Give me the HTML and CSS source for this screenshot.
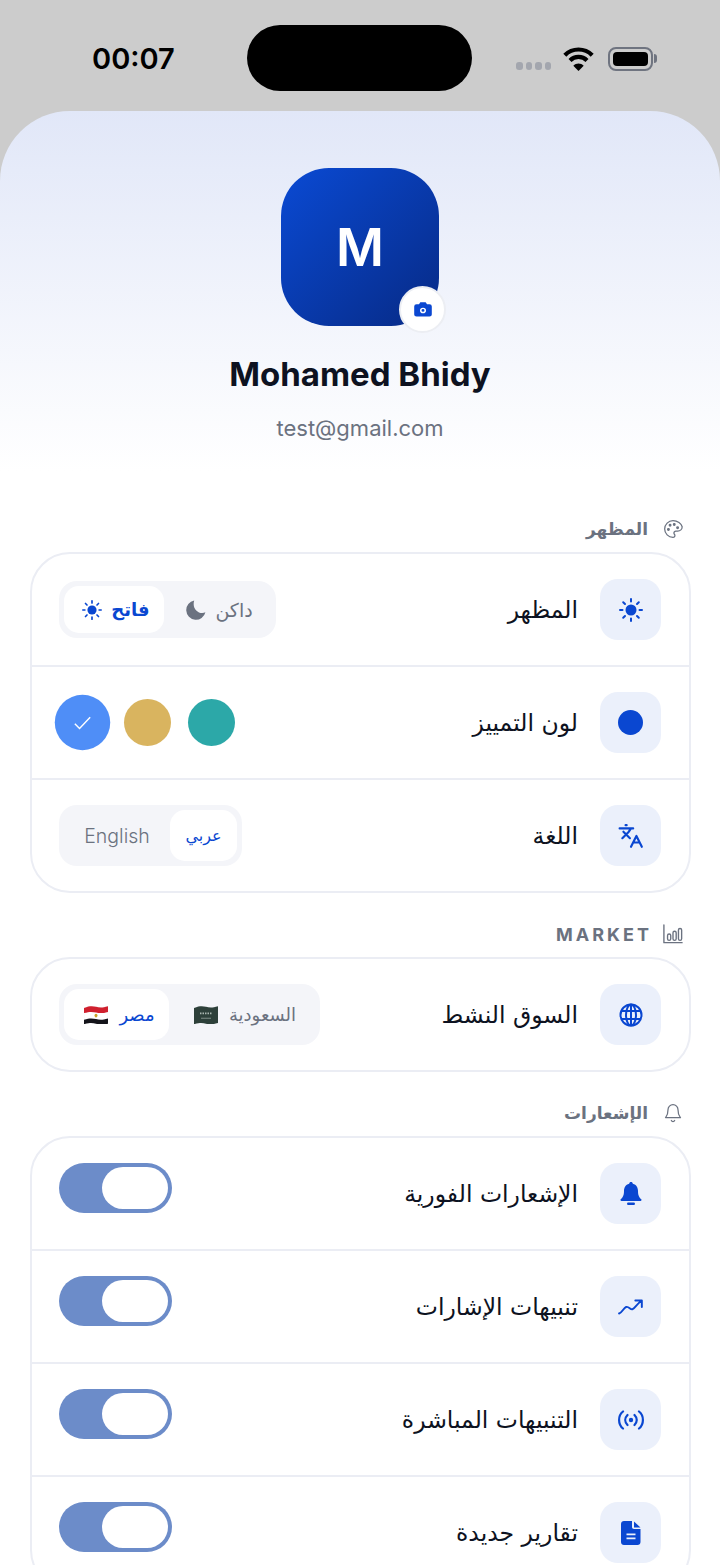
FILE: index.html
```html
<!DOCTYPE html>
<html lang="ar" dir="rtl">
<head>
    <meta charset="UTF-8">
    <meta name="viewport" content="width=device-width, initial-scale=1.0">
    <title>Profile settings</title>
    <link rel="stylesheet" href="styles.css">
</head>
<body>
<div class="phone">
    <div class="status-bar" dir="ltr">
        <span class="status-time">00:07</span>
        <div class="island"></div>
        <div class="status-icons">
            <div class="signal"><i></i><i></i><i></i><i></i></div>
            <svg class="wifi" viewBox="0 0 31 25" fill="none" stroke="#000" stroke-width="4.2">
                <path d="M1.8 9.2C9.4 1.6 21.6 1.6 29.2 9.2"/>
                <path d="M7 14.4c4.7-4.7 12.3-4.7 17 0"/>
                <path d="M15.5 25l-5.2-5.3c2.9-2.8 7.5-2.8 10.4 0z" fill="#000" stroke="none"/>
            </svg>
            <div class="battery"><div class="battery-fill"></div></div>
        </div>
    </div>

    <div class="sheet">
        <div class="profile">
            <div class="avatar">
                M
                <div class="avatar-badge">
                    <svg width="18" height="15" viewBox="0 0 18 16" preserveAspectRatio="none"><path fill="#0a47d1" fill-rule="evenodd" d="M2.5 2.5H5L6 .8C6.200.4 6.500.3 6.900.3h4.200c.4 0 .7.100.9.500l1 1.700h2.500A2.300 2.300 0 0 1 17.800 4.800v8.400a2.300 2.300 0 0 1-2.300 2.300h-13A2.300 2.300 0 0 1 .2 13.200V4.800A2.300 2.300 0 0 1 2.500 2.500zM9 12a3 3 0 1 0 0-6 3 3 0 0 0 0 6zm0-1.500a1.500 1.500 0 1 1 0-3 1.500 1.500 0 0 1 0 3z"/></svg>
                </div>
            </div>
            <div class="profile-name" dir="ltr">Mohamed Bhidy</div>
            <div class="profile-email" dir="ltr">test@gmail.com</div>
        </div>

        <div class="section">
            <div class="section-title">
                <svg class="title-icon" viewBox="0 0 24 24"><path d="M12 2C6.500 2 2 6.500 2 12s4.500 10 10 10c1.400 0 2.300-1 2.300-2.200 0-.6-.2-1.100-.6-1.500-.4-.4-.6-.9-.6-1.500 0-1.200 1-2.200 2.200-2.200h2.300c3 0 5.400-2.400 5.400-5.300C22 5.600 17.500 2 12 2z"/><circle cx="13.500" cy="6.500" r="1" fill="#6b7280"/><circle cx="17.500" cy="10.500" r="1" fill="#6b7280"/><circle cx="8.500" cy="7.500" r="1" fill="#6b7280"/><circle cx="6.500" cy="12.500" r="1" fill="#6b7280"/></svg>
                <span class="title-ar">المظهر</span>
            </div>
            <div class="card">
                <div class="row">
                    <div class="row-main">
                        <div class="row-icon">
                            <svg width="24" height="24" viewBox="0 0 24 24" fill="none" stroke="#0a47d1" stroke-width="2" stroke-linecap="round"><circle cx="12" cy="12" r="5.500" fill="#0a47d1" stroke="none"/><path d="M12 1v2.500M12 20.500V23M1 12h2.500M20.500 12H23M4.200 4.200l1.800 1.800M18 18l1.800 1.800M4.200 19.800L6 18M18 6l1.800-1.800"/></svg>
                        </div>
                        <span class="row-label">المظهر</span>
                    </div>
                    <div class="seg seg-theme">
                        <div class="seg-item">
                            داكن
                            <svg width="20" height="20" viewBox="0 0 20 20"><path fill="#6b7280" d="M8.200.6a9.700 9.700 0 1 0 11.200 11.700C13.400 15.200 5.500 9 8.200.6z"/></svg>
                        </div>
                        <div class="seg-item is-active seg-bold">
                            فاتح
                            <svg width="20" height="20" viewBox="0 0 24 24" fill="none" stroke="#0a47d1" stroke-width="2" stroke-linecap="round"><circle cx="12" cy="12" r="5.500" fill="#0a47d1" stroke="none"/><path d="M12 1v2.500M12 20.500V23M1 12h2.500M20.500 12H23M4.200 4.200l1.800 1.800M18 18l1.800 1.800M4.200 19.800L6 18M18 6l1.800-1.800"/></svg>
                        </div>
                    </div>
                </div>
                <div class="row">
                    <div class="row-main">
                        <div class="row-icon"><div class="dot"></div></div>
                        <span class="row-label">لون التمييز</span>
                    </div>
                    <div class="swatches">
                        <div class="swatch swatch-teal"></div>
                        <div class="swatch swatch-gold"></div>
                        <div class="swatch swatch-blue">
                            <svg width="15" height="12" viewBox="0 0 15 12" fill="none" stroke="#fff" stroke-width="1.200"><path d="M1 6.500L5 10.500 14 1"/></svg>
                        </div>
                    </div>
                </div>
                <div class="row">
                    <div class="row-main">
                        <div class="row-icon">
                            <svg width="26" height="26" viewBox="0 0 24 24" fill="none" stroke="#0a47d1" stroke-width="2" stroke-linecap="round" stroke-linejoin="round"><path d="M5 8l6 6M4 14l6-6 2-3M1.500 5H14M7 2h1M22 22l-5-10-5 10M14 18h6"/></svg>
                        </div>
                        <span class="row-label">اللغة</span>
                    </div>
                    <div class="seg seg-lang">
                        <div class="seg-item is-active seg-small">عربي</div>
                        <div class="seg-item seg-plain seg-latin">English</div>
                    </div>
                </div>
            </div>
        </div>

        <div class="section">
            <div class="section-title">
                <svg class="title-icon" viewBox="0 0 22 22"><path d="M1 1v19.500h20"/><rect x="5" y="11" width="3.500" height="7" rx="1.700"/><rect x="11" y="8" width="3.500" height="10" rx="1.700"/><rect x="17" y="5" width="3.500" height="13" rx="1.700"/></svg>
                <span dir="ltr" class="title-latin">MARKET</span>
            </div>
            <div class="card">
                <div class="row">
                    <div class="row-main">
                        <div class="row-icon">
                            <svg width="24" height="24" viewBox="0 0 24 24" fill="none" stroke="#0a47d1" stroke-width="2"><circle cx="12" cy="12" r="10.500"/><ellipse cx="12" cy="12" rx="5" ry="10.500"/><path d="M12 1.500v21M2.500 8h19M2.500 16h19"/></svg>
                        </div>
                        <span class="row-label">السوق النشط</span>
                    </div>
                    <div class="seg seg-market">
                        <div class="seg-item seg-plain">
                            السعودية
                            <svg class="flag" viewBox="0 .8 24 15" preserveAspectRatio="none"><path fill="#2d403a" d="M0 2.500C6 .5 9 1 12 1.500s6 1 12-.5v14c-6 1.500-9 1-12 .5s-6-1-12 .5z"/><path fill="none" stroke="#aab6b1" stroke-width="1.500" stroke-dasharray="1.500 1" d="M6 7h12"/><path stroke="#8b9a94" stroke-width=".8" d="M7 11h10"/></svg>
                        </div>
                        <div class="seg-item is-active seg-plain">
                            مصر
                            <svg class="flag" viewBox="0 .8 24 15" preserveAspectRatio="none"><path fill="#fff" stroke="#e5e7eb" stroke-width=".3" d="M0 2.500C6 .5 9 1 12 1.500s6 1 12-.5v14c-6 1.500-9 1-12 .5s-6-1-12 .5z"/><path fill="#d0202e" d="M0 2.500C6 .5 9 1 12 1.500s6 1 12-.5v4.700c-6 1.500-9 1-12 .5s-6-1-12 .5z"/><path fill="#14141a" d="M0 12.200c6-1.500 9-1 12-.5s6 1 12-.5V15.500c-6 1-9 .5-12 0s-6-1-12 .5z"/><circle cx="12" cy="8.800" r="1.500" fill="#c9a227"/></svg>
                        </div>
                    </div>
                </div>
            </div>
        </div>

        <div class="section">
            <div class="section-title">
                <svg class="title-icon" viewBox="0 0 24 24"><path d="M6 8a6 6 0 0 1 12 0c0 7 2.500 8.500 3 9.500H3c.5-1 3-2.500 3-9.500zM10 21a2.200 2.200 0 0 0 4 0"/></svg>
                <span class="title-ar">الإشعارات</span>
            </div>
            <div class="card">
                <div class="row">
                    <div class="row-main">
                        <div class="row-icon">
                            <svg width="22" height="24" viewBox="0 0 22 24"><path fill="#0a47d1" d="M11 0c1 0 1.700.700 1.800 1.700C16.500 2.500 18 5.700 18 9c0 5 1.500 6.500 3.300 8.300.5.600.2 1.700-.8 1.700h-19c-1 0-1.300-1.100-.8-1.700C2.500 15.500 4 14 4 9c0-3.300 1.500-6.500 5.200-7.300C9.300.7 10 0 11 0z"/><rect x="7" y="20.500" width="8" height="2.500" rx="1.200" fill="#0a47d1"/></svg>
                        </div>
                        <span class="row-label">الإشعارات الفورية</span>
                    </div>
                    <div class="toggle"><div class="toggle-thumb"></div></div>
                </div>
                <div class="row">
                    <div class="row-main">
                        <div class="row-icon">
                            <svg width="26" height="26" viewBox="0 0 24 24" fill="none" stroke="#0a47d1" stroke-width="1.800" stroke-linecap="round" stroke-linejoin="round"><path d="M1 18c3-1 4-5 6.500-6s4 3 6 2 4-5 8-7.500M16 6h6v6"/></svg>
                        </div>
                        <span class="row-label">تنبيهات الإشارات</span>
                    </div>
                    <div class="toggle"><div class="toggle-thumb"></div></div>
                </div>
                <div class="row">
                    <div class="row-main">
                        <div class="row-icon">
                            <svg width="28" height="20" viewBox="0 0 28 20" fill="none" stroke="#0a47d1" stroke-width="2.200" stroke-linecap="round"><path d="M6 1.500C.8 5.500.8 14.500 6 18.500M10.500 5C7.500 8 7.500 12 10.500 15M17.500 5c3 3 3 7 0 10M22 1.500c5.200 4 5.200 13 0 17"/><circle cx="14" cy="10" r="2.200" fill="#0a47d1" stroke="none"/></svg>
                        </div>
                        <span class="row-label">التنبيهات المباشرة</span>
                    </div>
                    <div class="toggle"><div class="toggle-thumb"></div></div>
                </div>
                <div class="row">
                    <div class="row-main">
                        <div class="row-icon">
                            <svg width="20" height="24" viewBox="0 0 20 24"><path fill="#0a47d1" fill-rule="evenodd" d="M3 0h8v6c0 1.200.8 2 2 2h6.500v13c0 1.700-1.300 3-3 3H3c-1.700 0-3-1.300-3-3V3c0-1.700 1.300-3 3-3zm2.500 12.500v1.800h9v-1.800zm0 4v1.800h9v-1.800zM13 .5l6.500 6H13z"/></svg>
                        </div>
                        <span class="row-label">تقارير جديدة</span>
                    </div>
                    <div class="toggle"><div class="toggle-thumb"></div></div>
                </div>
            </div>
        </div>
    </div>
</div>
</body>
</html>
```
FILE: styles.css
```css
* {
    box-sizing: border-box;
}
html, body {
    margin: 0;
    padding: 0;
    height: 1565px;
    overflow: hidden;
}
body {
    font-family: "DejaVu Sans", sans-serif;
    background-color: #cccccc;
    color: #0d1221;
}
.phone {
    height: 1565px;
    overflow: hidden;
}

/* status bar */
.status-bar {
    height: 111px;
    display: flex;
    align-items: flex-start;
    padding: 25px 64px 0 92px;
}
.status-time {
    width: 155px;
    margin-top: 16px;
    font-family: Inter, sans-serif;
    font-size: 29px;
    font-weight: 600;
    line-height: 36px;
    color: #000;
}
.island {
    width: 225px;
    height: 66px;
    border-radius: 33px;
    background-color: #000;
}
.status-icons {
    display: flex;
    align-items: center;
    margin-left: 44px;
    margin-top: 21px;
}
.signal {
    display: flex;
    gap: 3px;
    margin-top: 14px;
}
.signal i {
    width: 6.500px;
    height: 8px;
    border-radius: 3px;
    background-color: #a3a6ae;
}
.wifi {
    width: 31px;
    height: 25px;
    margin-left: 12px;
}
.battery {
    position: relative;
    width: 45px;
    height: 24px;
    margin-left: 14px;
    padding: 3px;
    border: 2px solid #6f7480;
    border-radius: 8px;
}
.battery::after {
    content: "";
    position: absolute;
    right: -6px;
    top: 5px;
    width: 3px;
    height: 9px;
    border-radius: 0 3px 3px 0;
    background-color: #6f7480;
}
.battery-fill {
    width: 100%;
    height: 100%;
    border-radius: 4px;
    background-color: #000;
}

/* sheet and profile */
.sheet {
    height: 1454px;
    border-radius: 70px 70px 0 0;
    background: linear-gradient(180deg, #e1e7f8 0, #ffffff 360px);
    padding: 0 29px 0 30px;
}
.profile {
    display: flex;
    flex-direction: column;
    align-items: center;
    margin-right: 1px;
    padding-top: 57px;
    height: 406px;
}
.avatar {
    position: relative;
    width: 158px;
    height: 158px;
    border-radius: 48px;
    background: linear-gradient(135deg, #0a4ad4, #072a85);
    color: #fff;
    font-family: Inter, sans-serif;
    font-size: 52px;
    font-weight: 600;
    display: flex;
    align-items: center;
    justify-content: center;
}
.avatar-badge {
    position: absolute;
    left: 118px;
    bottom: -7px;
    width: 47px;
    height: 47px;
    border-radius: 50%;
    background-color: #fff;
    border: 2px solid #eceef3;
    display: flex;
    align-items: center;
    justify-content: center;
}
.profile-name {
    margin-top: 26px;
    font-family: Inter, sans-serif;
    font-size: 33px;
    font-weight: 700;
    line-height: 44px;
    color: #0d1221;
}
.profile-email {
    margin-top: 17px;
    font-family: Inter, sans-serif;
    font-size: 22px;
    line-height: 30px;
    color: #6b7280;
}

/* sections */
.section {
    margin-bottom: 29px;
}
.section-title {
    display: flex;
    align-items: center;
    gap: 13px;
    height: 24px;
    margin-bottom: 11px;
    padding-right: 8px;
    font-size: 17px;
    font-weight: 700;
    color: #6b7280;
}
.title-ar {
    letter-spacing: 2.500px;
    margin-right: 2px;
}
.title-latin {
    font-family: Inter, sans-serif;
    font-size: 18px;
    letter-spacing: 3px;
    margin-right: -2px;
}
.title-icon {
    width: 20px;
    height: 20px;
    fill: none;
    stroke: #6b7280;
    stroke-width: 1.500;
    stroke-linecap: round;
    stroke-linejoin: round;
}
.card {
    border: 2px solid #ebedf4;
    border-radius: 40px;
    background-color: #fff;
}
.row {
    display: flex;
    align-items: center;
    justify-content: space-between;
    padding: 25px 28px 25px 27px;
    border-bottom: 2px solid #ebedf4;
}
.row:last-child {
    border-bottom: none;
}
.row-main {
    display: flex;
    align-items: center;
    gap: 22px;
}
.row-icon {
    width: 61px;
    height: 61px;
    border-radius: 18px;
    background-color: #ebf0fb;
    display: flex;
    align-items: center;
    justify-content: center;
}
.row-label {
    font-size: 23.500px;
    font-weight: 500;
    color: #0d1221;
}
.dot {
    width: 25px;
    height: 25px;
    border-radius: 50%;
    background-color: #0a47d1;
}

/* segmented controls */
.seg {
    display: grid;
    padding: 5px;
    border-radius: 18px;
    background-color: #f4f5f9;
}
.seg-theme {
    height: 57px;
    grid-template-columns: 107px 100px;
}
.seg-lang {
    height: 61px;
    grid-template-columns: 67px 106px;
}
.seg-market {
    height: 61px;
    grid-template-columns: 146px 105px;
}
.seg-item {
    display: flex;
    align-items: center;
    justify-content: center;
    gap: 9px;
    border-radius: 15px;
    font-size: 19px;
    font-weight: 500;
    color: #6b7280;
}
.seg-theme .seg-item {
    padding-left: 4px;
}
.seg-market .seg-item {
    gap: 11px;
    padding-left: 6px;
}
.seg-bold {
    font-weight: 700;
    font-size: 18px;
}
.seg-plain {
    font-weight: 400;
    font-size: 18px;
}
.seg-small {
    font-size: 16px;
}
.seg-latin {
    font-family: Inter, sans-serif;
    font-size: 19.500px;
    font-weight: 300;
}
.seg-item.is-active {
    background-color: #fff;
    color: #0a47d1;
}
.flag {
    width: 24px;
    height: 18px;
}

/* accent swatches */
.swatches {
    display: flex;
    align-items: center;
    gap: 17.500px;
}
.swatch {
    width: 47px;
    height: 47px;
    border-radius: 50%;
    display: flex;
    align-items: center;
    justify-content: center;
}
.swatch-teal {
    background-color: #2ca8a8;
}
.swatch-gold {
    background-color: #d9b45f;
}
.swatch-blue {
    background-color: #4f8ef7;
    transform: scale(1.18);
}

/* toggles */
.toggle {
    align-self: flex-start;
    width: 113px;
    height: 50px;
    padding: 4px;
    border-radius: 25px;
    background-color: #6c8cc9;
}
.toggle-thumb {
    width: 66px;
    height: 42px;
    border-radius: 21px;
    background-color: #fff;
}
```
